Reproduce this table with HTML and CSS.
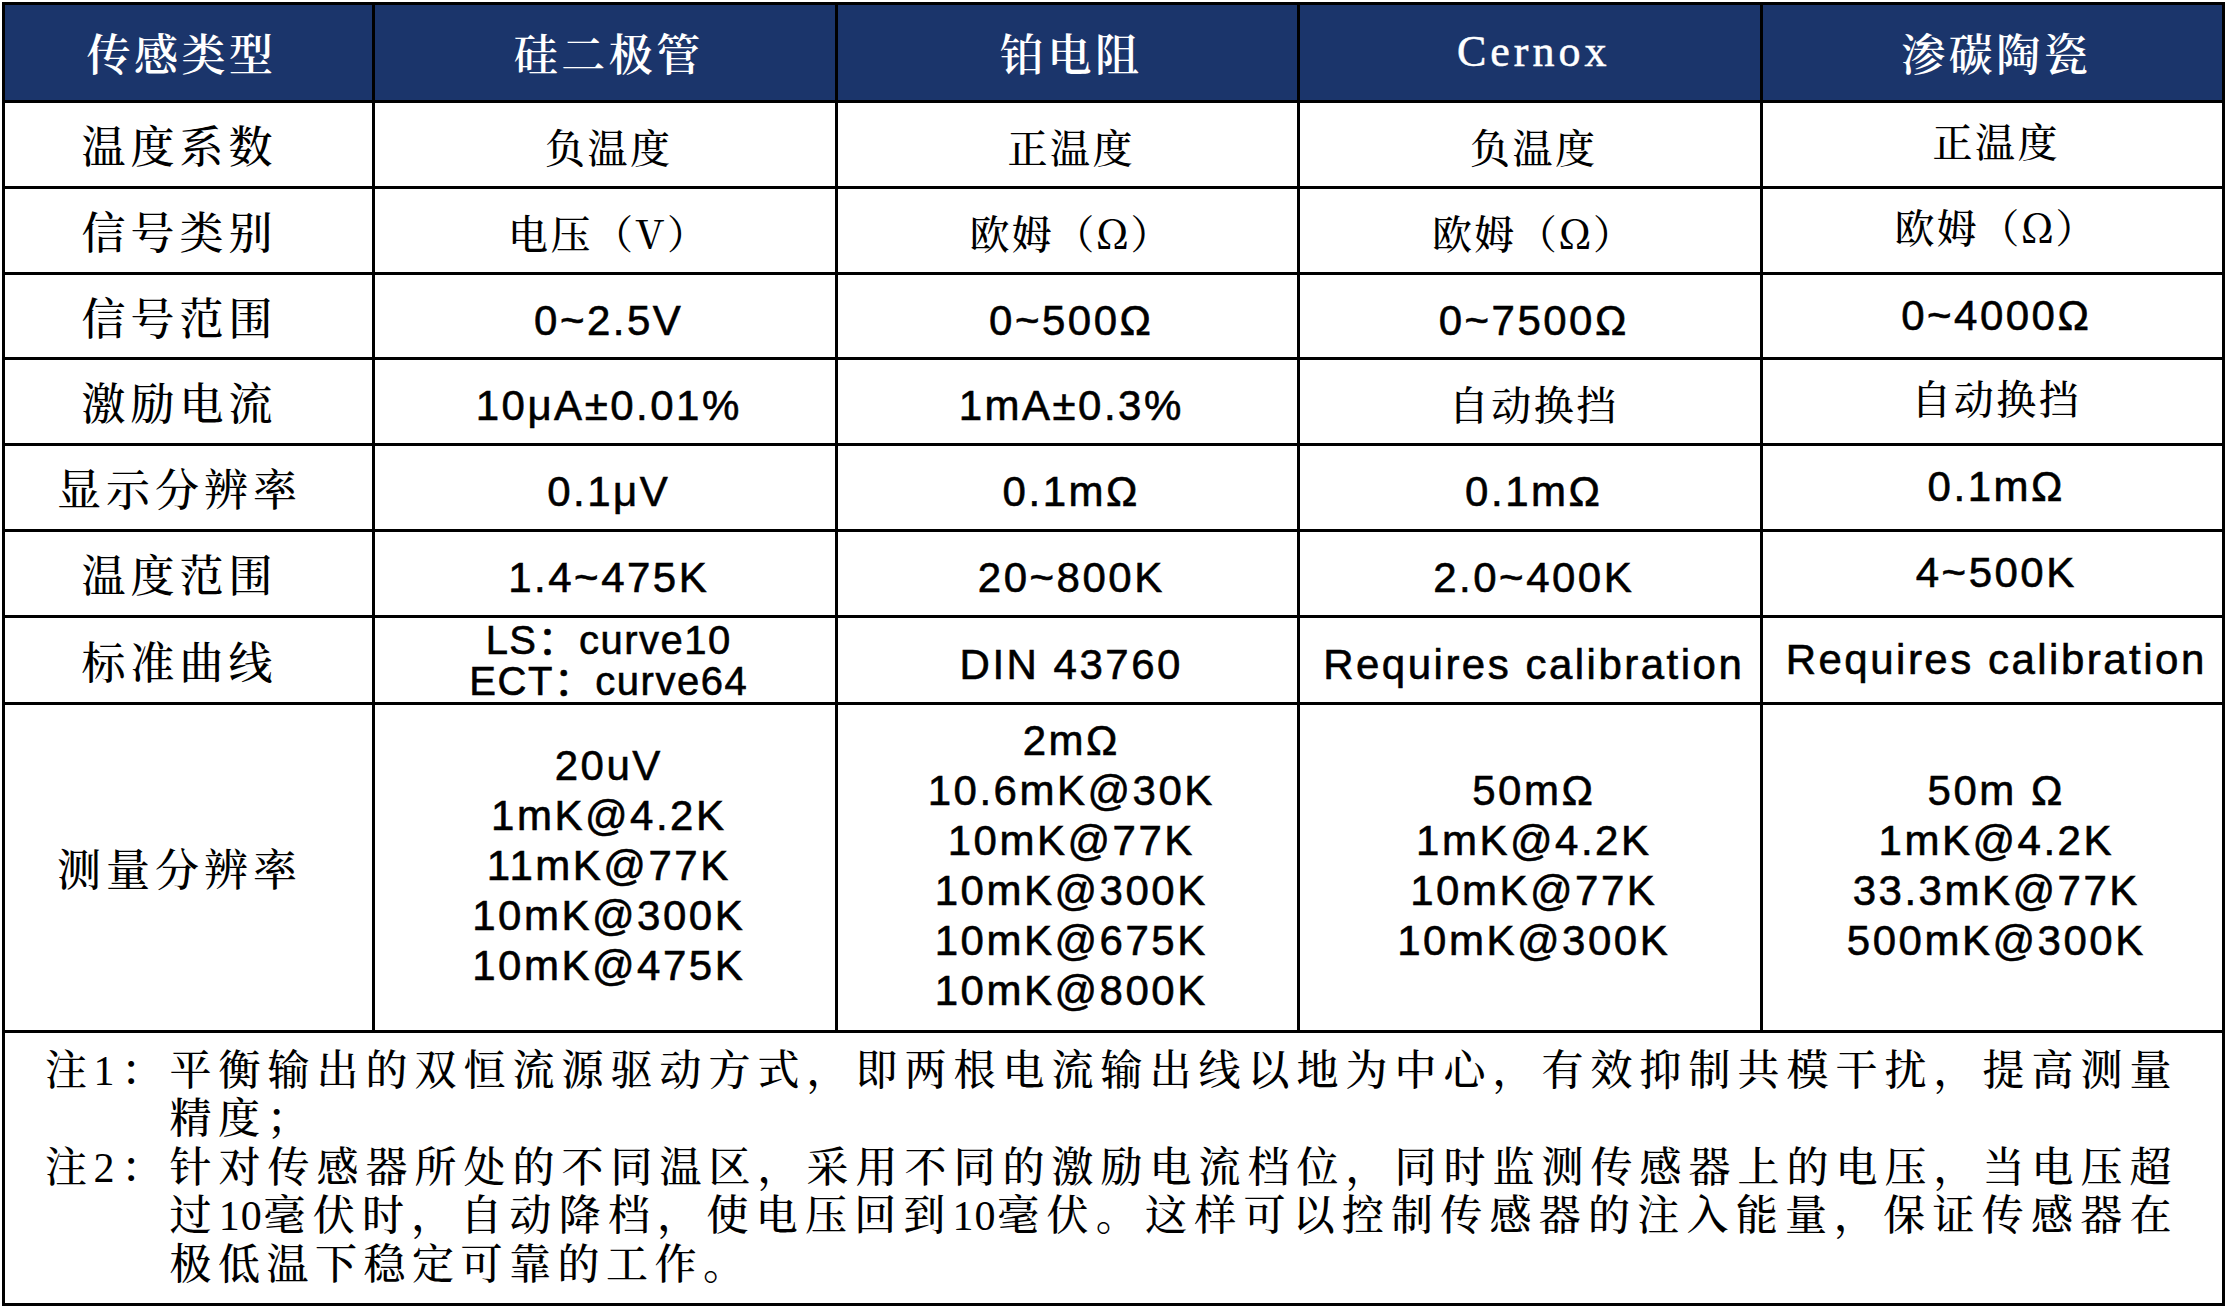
FILE: index.html
```html
<!DOCTYPE html>
<html lang="zh-CN">
<head>
<meta charset="utf-8">
<title>传感器参数对比</title>
<link rel="stylesheet" href="styles.css">
</head>
<body>
<div class="sheet">
<table class="spec">
  <colgroup>
    <col class="col-first">
    <col><col><col><col>
  </colgroup>
  <thead>
    <tr class="head">
      <th class="hd lab">传感类型</th>
      <th class="hd">硅二极管</th>
      <th class="hd">铂电阻</th>
      <th class="hd latin-serif">Cernox</th>
      <th class="hd">渗碳陶瓷</th>
    </tr>
  </thead>
  <tbody>
    <tr class="r86">
      <th class="lab">温度系数</th>
      <td class="zh">负温度</td>
      <td class="zh">正温度</td>
      <td class="zh">负温度</td>
      <td class="zh c5">正温度</td>
    </tr>
    <tr class="r86">
      <th class="lab">信号类别</th>
      <td class="zh">电压（V）</td>
      <td class="zh">欧姆（Ω）</td>
      <td class="zh">欧姆（Ω）</td>
      <td class="zh c5">欧姆（Ω）</td>
    </tr>
    <tr class="r85">
      <th class="lab">信号范围</th>
      <td class="en">0~2.5V</td>
      <td class="en">0~500Ω</td>
      <td class="en">0~7500Ω</td>
      <td class="en c5">0~4000Ω</td>
    </tr>
    <tr class="r86">
      <th class="lab">激励电流</th>
      <td class="en">10μA±0.01%</td>
      <td class="en">1mA±0.3%</td>
      <td class="zh">自动换挡</td>
      <td class="zh c5">自动换挡</td>
    </tr>
    <tr class="r86">
      <th class="lab">显示分辨率</th>
      <td class="en">0.1μV</td>
      <td class="en">0.1mΩ</td>
      <td class="en">0.1mΩ</td>
      <td class="en c5">0.1mΩ</td>
    </tr>
    <tr class="r86">
      <th class="lab">温度范围</th>
      <td class="en">1.4~475K</td>
      <td class="en">20~800K</td>
      <td class="en">2.0~400K</td>
      <td class="en c5">4~500K</td>
    </tr>
    <tr class="r85">
      <th class="lab">标准曲线</th>
      <td class="en tight">LS：curve10<br>ECT：curve64</td>
      <td class="en">DIN 43760</td>
      <td class="en">Requires calibration</td>
      <td class="en c5">Requires calibration</td>
    </tr>
    <tr class="meas">
      <th class="lab">测量分辨率</th>
      <td class="en multi">20uV<br>1mK@4.2K<br>11mK@77K<br>10mK@300K<br>10mK@475K</td>
      <td class="en multi">2mΩ<br>10.6mK@30K<br>10mK@77K<br>10mK@300K<br>10mK@675K<br>10mK@800K</td>
      <td class="en multi">50mΩ<br>1mK@4.2K<br>10mK@77K<br>10mK@300K</td>
      <td class="en multi">50m Ω<br>1mK@4.2K<br>33.3mK@77K<br>500mK@300K</td>
    </tr>
    <tr class="notes">
      <td colspan="5" class="notes-cell">
        <div class="note">
          <span class="tag">注<span class="num">1</span>：</span>
          <div class="body">
            <span class="ln full">平衡输出的双恒流源驱动方式，即两根电流输出线以地为中心，有效抑制共模干扰，提高测量</span>
            <span class="ln">精度；</span>
          </div>
        </div>
        <div class="note">
          <span class="tag">注<span class="num">2</span>：</span>
          <div class="body">
            <span class="ln full">针对传感器所处的不同温区，采用不同的激励电流档位，同时监测传感器上的电压，当电压超</span>
            <span class="ln full">过<span class="num">10</span>毫伏时，自动降档，使电压回到<span class="num">10</span>毫伏。这样可以控制传感器的注入能量，保证传感器在</span>
            <span class="ln">极低温下稳定可靠的工作。</span>
          </div>
        </div>
      </td>
    </tr>
  </tbody>
</table>
</div>
</body>
</html>
```

FILE: styles.css
```css
html, body {
  margin: 0;
  padding: 0;
  background: #ffffff;
}

.sheet {
  padding: 2px 0 0 2px;
}

.spec {
  border-collapse: separate;
  border-spacing: 0;
  table-layout: fixed;
  width: 2223px;
  border-left: 3px solid #000;
  border-top: 3px solid #000;
  color: #000;
  font-family: "Noto Serif CJK SC", "Noto Sans CJK SC", serif;
}

.col-first {
  width: 370px;
}

.spec th,
.spec td {
  border-right: 3px solid #000;
  border-bottom: 3px solid #000;
  padding: 0;
  text-align: center;
  vertical-align: middle;
  font-weight: 500;
  line-height: 1.2;
  white-space: nowrap;
  overflow: hidden;
}

.head { height: 98px; }
.r86 { height: 86px; }
.r85 { height: 85px; }
.meas { height: 328px; }
.notes { height: 273px; }

.spec th.hd {
  background: #1b356b;
  color: #ffffff;
  font-size: 44px;
  font-weight: 600;
  letter-spacing: 3.5px;
  padding-left: 8px;
}

.spec th.hd.lab {
  padding-left: 0;
  padding-right: 14px;
  letter-spacing: 3.5px;
}

.spec th.latin-serif {
  font-family: "Liberation Serif", "Noto Serif CJK SC", serif;
  font-weight: normal;
  letter-spacing: 4px;
  -webkit-text-stroke: 0.5px #ffffff;
}

.lab {
  font-size: 44px;
  letter-spacing: 5px;
}

.spec th.lab {
  padding-right: 18px;
}

.spec td.zh {
  font-family: "Noto Serif CJK SC", "Noto Sans CJK SC", serif;
  font-size: 40px;
  letter-spacing: 2.5px;
  padding-left: 8px;
  padding-top: 3px;
}

.spec td.en {
  font-family: "Liberation Sans", "Noto Sans CJK SC", sans-serif;
  font-weight: normal;
  font-size: 42px;
  letter-spacing: 2.5px;
  padding-left: 8px;
  padding-top: 10px;
  -webkit-text-stroke: 0.6px #000;
}

.spec td.tight {
  font-size: 40px;
  letter-spacing: 1.5px;
  line-height: 41px;
  padding-top: 2px;
}

.spec td.multi {
  line-height: 50px;
  padding-top: 0;
  padding-bottom: 4px;
}

.spec td.c5 {
  padding-bottom: 10px;
}

.spec td.zh.c5 {
  padding-top: 0;
}

.spec td.notes-cell {
  text-align: left;
  white-space: normal;
  padding: 0 44px 0 40px;
  font-family: "Liberation Serif", "Noto Serif CJK SC", "Noto Sans CJK SC", serif;
  font-size: 42px;
  letter-spacing: 6.5px;
  line-height: 48.5px;
}

.note {
  display: grid;
  grid-template-columns: 124.5px 1fr;
}

.tag {
  white-space: nowrap;
}

.num {
  letter-spacing: 1px;
}

.tag .num {
  letter-spacing: 6.5px;
}

.body {
  display: flex;
  flex-direction: column;
}

.ln {
  display: block;
  text-align: left;
}

.ln.full {
  text-align: justify;
  text-align-last: justify;
}
```
